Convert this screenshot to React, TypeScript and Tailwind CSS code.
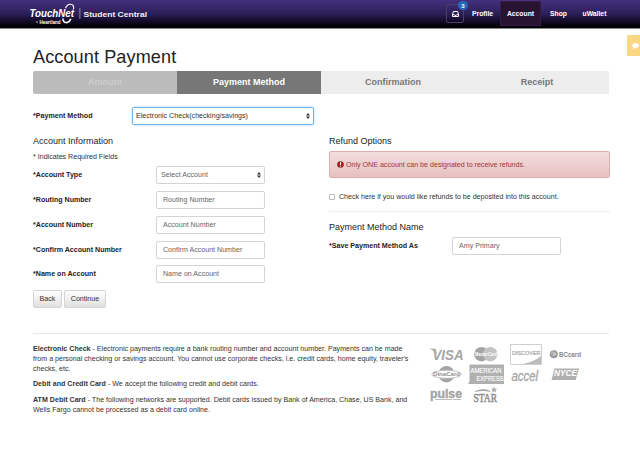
import React from "react";

const inputBox =
  "flex h-[18px] w-[109px] items-center rounded-[2px] border border-[#d4d4d4] bg-white text-[#666]";

function Arrows() {
  return (
    <svg className="h-[6px] w-[4px]" viewBox="0 0 4 6" fill="#333">
      <path d="M2 0 4 2.4H0zM2 6 0 3.6h4z" />
    </svg>
  );
}

function Field({ label }: { label: string }) {
  return (
    <div className="mb-[6.8px] flex h-[18px] items-center">
      <div className="w-[123px] font-bold text-[#222]">*{label}</div>
      <div className={`${inputBox} pl-[6px]`}>{label}</div>
    </div>
  );
}

function TouchNetLogo() {
  return (
    <svg className="h-[28px] w-[122px]" viewBox="28 0 122 28" fill="#fff" fontFamily="Liberation Sans, sans-serif">
      <path d="M65.5 8.2C67.5 3 74.5 2.6 73.6 9" fill="none" stroke="#fff" strokeWidth="1.2" />
      <path d="M62.8 18.5c.8 6 6.2 5 8 .3" fill="none" stroke="#fff" strokeWidth="1.6" />
      <text x="29.5" y="17" fontSize="10" fontWeight="bold" fontStyle="italic" textLength="44.5" lengthAdjust="spacingAndGlyphs">TouchNet</text>
      <circle cx="37" cy="22" r=".7" />
      <text x="39.5" y="23.5" fontSize="4.8" fontWeight="bold" textLength="21" lengthAdjust="spacingAndGlyphs">Heartland</text>
      <path d="M79.5 8h.8v11h-.8z" opacity=".6" />
      <text x="83.5" y="16.5" fontSize="8" fontWeight="bold" textLength="63.5" opacity=".93" lengthAdjust="spacingAndGlyphs">Student Central</text>
    </svg>
  );
}

function CardLogos() {
  return (
    <svg className="h-[66px] w-[160px]" viewBox="426 341 160 66" fill="#a5a5a5" fontFamily="Liberation Sans, sans-serif">
      <text x="432.5" y="359.5" fontSize="15" fontWeight="bold" fontStyle="italic" textLength="31" lengthAdjust="spacingAndGlyphs">VISA</text>
      <path d="M429 348.8h6.5l1.5 6c-1.500-3-4-5-8-6" />
      <circle cx="481.5" cy="354.2" r="7.3" />
      <circle cx="490.2" cy="354.2" r="7.3" fill="#c4c4c4" />
      <text x="475" y="356.4" fontSize="6" fontWeight="bold" fill="#fff" textLength="22" lengthAdjust="spacingAndGlyphs">MasterCard</text>
      <path d="M510.5 344.5h31v20h-31z" fill="#fff" stroke="#cfcfcf" />
      <path d="M523 364c8-1.5 14-4.500 18-8v8z" fill="#bbb" />
      <text x="512" y="354.5" fontSize="5.8" stroke="#a5a5a5" strokeWidth=".2" textLength="28.5" lengthAdjust="spacingAndGlyphs">DISCOVER</text>
      <circle cx="553.8" cy="354.2" r="4" fill="#999" />
      <path d="M551 354c1-3 4-2 4 0s-2 2-2 1 2-2 3.500-.5" stroke="#eee" strokeWidth=".7" fill="none" />
      <text x="559" y="356.8" fontSize="6.5" fontWeight="bold" fill="#888" textLength="22" lengthAdjust="spacingAndGlyphs">BCcard</text>

      <circle cx="446.5" cy="374.3" r="8.2" />
      <ellipse cx="446.5" cy="374.3" rx="14.8" ry="4" fill="#fff" stroke="#b5b5b5" strokeWidth=".8" />
      <text x="433" y="376.3" fontSize="5.8" fontWeight="bold" fill="#8f8f8f" textLength="27" lengthAdjust="spacingAndGlyphs">DinaCard</text>
      <path d="M469.500 364.500H504V384h-35.500v-2h1z" fill="#b0b0b0" />
      <g fill="#fff" stroke="#fff" strokeWidth=".15">
        <text x="470.5" y="373.2" fontSize="7.6" textLength="31" lengthAdjust="spacingAndGlyphs">AMERICAN</text>
        <text x="476.5" y="380.9" fontSize="7.6" textLength="27" lengthAdjust="spacingAndGlyphs">EXPRESS</text>
      </g>
      <text x="511.5" y="381" fontSize="14" fontStyle="italic" stroke="#a5a5a5" strokeWidth=".3" textLength="26.5" lengthAdjust="spacingAndGlyphs">accel</text>
      <path d="M554.500 368.500h24.500l-3.300 11.500h-24.200z" fill="#b0b0b0" />
      <text x="554" y="375.8" fontSize="8.5" fontWeight="bold" fontStyle="italic" fill="#fff" textLength="23" lengthAdjust="spacingAndGlyphs">NYCE</text>

      <text x="430" y="398" fontSize="12" fontWeight="bold" stroke="#a5a5a5" strokeWidth=".4" textLength="32" lengthAdjust="spacingAndGlyphs">pulse</text>
      <path d="M435 399h17v.8h-17zM453 399h8v.8h-8z" />
      <text x="473.5" y="402.2" fontSize="12" fontFamily="Liberation Serif, serif" fill="#8c8c8c" stroke="#8c8c8c" strokeWidth=".5" textLength="23.5" lengthAdjust="spacingAndGlyphs">STAR</text>
      <path d="m494 386.500.9 2.200 2.400.1-1.900 1.500.7 2.300-2.100-1.300-2 1.300.6-2.300-1.800-1.500 2.400-.1z" />
      <path d="M475 391.500q9-4 15.500 0-7-2-15.500 0" fill="#888" stroke="#888" strokeWidth=".4" />
    </svg>
  );
}

export default function App() {
  return (
    <div
      className="relative h-[450px] w-[640px] overflow-hidden bg-white text-[7.1px] leading-[10px] text-[#333]"
      style={{ fontFamily: '"Liberation Sans", Arial, sans-serif' }}
    >
      <header className="flex h-[29px] items-start border-b border-[#888] bg-linear-to-b from-[#44307f] via-[#2c1f57] to-[#020104] pl-[28px] text-[6.8px] font-bold text-white">
        <TouchNetLogo />
        <nav className="ml-[296px] flex h-[27px] items-center">
          <div className="relative flex h-[19px] w-[18px] items-center justify-center rounded-[2px] border border-[#494068]">
            <svg className="h-[6px] w-[7px]" viewBox="0 0 7 6" fill="none" stroke="#fff" strokeWidth="1">
              <path d="M1.400.5h4.200l.9 3v2h-6v-2zM.5 3.600h1.700l.5.8h1.600l.5-.8h1.700" />
            </svg>
            <span className="absolute -top-[4px] left-[11px] flex h-[9px] w-[10px] items-center justify-center rounded-full bg-[#2668b8] text-[6px] leading-none">3</span>
          </div>
          <span className="ml-[8px] w-[28px]">Profile</span>
          <span className="flex h-[25px] w-[41px] items-center justify-center border border-[#351d49] bg-[#281333]">Account</span>
          <span className="ml-[9px] w-[32.5px]">Shop</span>
          <span>uWallet</span>
        </nav>
      </header>
      <div className="absolute top-[35px] right-0 flex h-[21px] w-[13px] items-center rounded-l-[1px] bg-[#fbd683] pl-[5px]">
        <svg className="h-[6px] w-[7px]" viewBox="0 0 7 6" fill="#fff"><path d="M3.500 0C6 0 7 1.200 7 2.500S5.700 5 3.500 5L1 6l.4-1.700C-.8 2.700.5 0 3.500 0" /></svg>
      </div>

      <main className="w-[609px] pl-[33px]">
        <h1 className="mt-[16px] h-[26px] text-[18.1px] leading-[24px] tracking-[0.1px] text-[#222]">Account Payment</h1>
        <div className="grid h-[23px] grid-cols-4 overflow-hidden rounded-l-[2px] text-center text-[9px] leading-[23px] font-bold text-[#777]">
          <div className="bg-[#bbb] text-[#cecece]">Amount</div>
          <div className="bg-[#777] text-white">Payment Method</div>
          <div className="bg-[#ededed]">Confirmation</div>
          <div className="bg-[#ededed]">Receipt</div>
        </div>
        <div className="mt-[12px] flex h-[19px] items-center">
          <div className="w-[99px] font-bold text-[#222]">*Payment Method</div>
          <div className="flex h-[18px] w-[182px] items-center justify-between rounded-[2px] border border-[#75b5e5] pr-[3px] pl-[3px] shadow-[0_0_2px_#8bc6ed]">
            <span>Electronic Check(checking/savings)</span><Arrows />
          </div>
        </div>

        <div className="flex">
          <section className="w-[296px] shrink-0">
            <h2 className="mt-[10px] h-[16px] text-[9px] leading-[12px] text-[#222]">Account Information</h2>
            <div className="mt-[1px] mb-[4.3px] h-[10px]">* Indicates Required Fields</div>
            <div className="mb-[6.8px] flex h-[18px] items-center">
              <div className="w-[123px] font-bold text-[#222]">*Account Type</div>
              <div className={`${inputBox} justify-between pr-[3px] pl-[4px] text-[#444]`}>
                <span>Select Account</span><Arrows />
              </div>
            </div>
            <Field label="Routing Number" />
            <Field label="Account Number" />
            <Field label="Confirm Account Number" />
            <Field label="Name on Account" />
            <div className="flex gap-[2px]">
              <button className="h-[18px] w-[29px] rounded-[2px] border border-[#d5d5d5] bg-linear-to-b from-white to-[#e0e0e0]">Back</button>
              <button className="h-[18px] w-[42px] rounded-[2px] border border-[#d5d5d5] bg-linear-to-b from-white to-[#e0e0e0]">Continue</button>
            </div>
          </section>

          <section className="w-[281px] shrink-0">
            <h2 className="mt-[10px] h-[16px] text-[9px] leading-[12px] text-[#222]">Refund Options</h2>
            <div className="flex h-[27px] items-center rounded-[2px] border border-[#dfaeb0] bg-linear-to-b from-[#f2dede] to-[#e7c0c0] pl-[7px] text-[#a63235]">
              <svg className="mr-[2px] h-[7px] w-[7px]" viewBox="0 0 7 7"><circle cx="3.5" cy="3.5" r="3.3" fill="#a91d25" /><path d="M3 1.300h1v2.800H3zM3 4.800h1v1H3z" fill="#fff" /></svg>
              <span>Only ONE account can be designated to receive refunds.</span>
            </div>
            <div className="mt-[13.5px] flex h-[10px] items-center gap-[4px]">
              <span className="h-[6px] w-[6px] rounded-[1px] border border-[#bbb]" />
              <span>Check here if you would like refunds to be deposited into this account.</span>
            </div>
            <div className="mt-[9.5px] border-t border-[#eee]" />
            <h2 className="mt-[9px] h-[16px] text-[9px] leading-[12px] text-[#222]">Payment Method Name</h2>
            <div className="flex h-[18px] items-center">
              <div className="w-[123px] font-bold text-[#222]">*Save Payment Method As</div>
              <div className={`${inputBox} pl-[6px]`}>Amy Primary</div>
            </div>
          </section>
        </div>

        <footer className="mt-[24.7px] flex border-t border-[#e8e8e8]">
          <div className="w-[393px] pt-[10px] whitespace-nowrap">
            <p className="mb-[5.3px]"><b>Electronic Check</b> - Electronic payments require a bank routing number and account number. Payments can be made<br />from a personal checking or savings account. You cannot use corporate checks, i.e. credit cards, home equity, traveler's<br />checks, etc.</p>
            <p className="mb-[5.3px]"><b>Debit and Credit Card</b> - We accept the following credit and debit cards.</p>
            <p><b>ATM Debit Card</b> - The following networks are supported. Debit cards issued by Bank of America, Chase, US Bank, and<br />Wells Fargo cannot be processed as a debit card online.</p>
          </div>
          <div className="pt-[7px]"><CardLogos /></div>
        </footer>
      </main>
    </div>
  );
}
